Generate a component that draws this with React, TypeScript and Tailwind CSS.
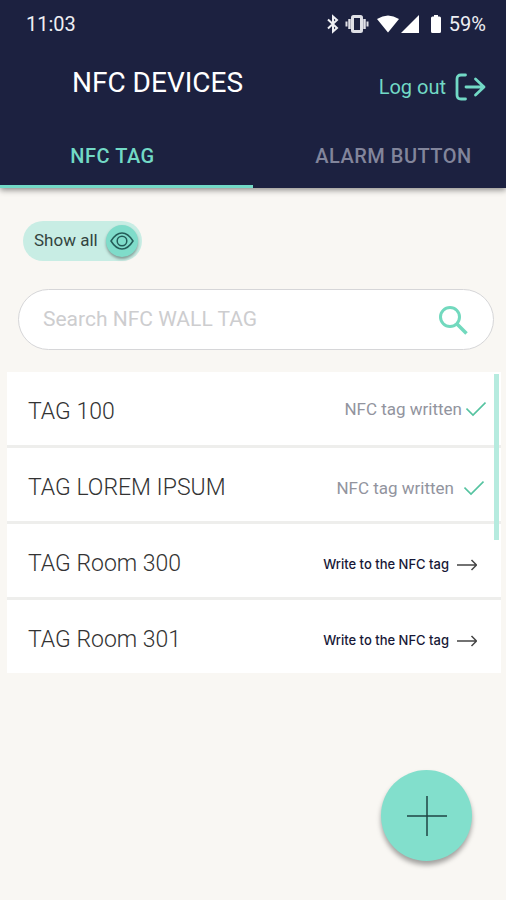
const tags = [
  { name: "TAG 100", written: true, inset: "pr-[15px] gap-1 pb-1.5" },
  { name: "TAG LOREM IPSUM", written: true, inset: "pr-[17px] gap-2.5" },
  { name: "TAG Room 300", written: false, inset: "pr-6 gap-2" },
  { name: "TAG Room 301", written: false, inset: "pr-6 gap-2" },
];

function StatusBar() {
  return (
    <div className="flex h-12 items-center justify-between pl-[26px] pr-5 text-xl text-[#eeeff3]">
      <span>11:03</span>
      <div className="flex items-center">
        <svg className="h-5 w-4" viewBox="0 0 16 20" fill="none" stroke="currentColor" strokeWidth="2">
          <path d="M3 5.500 12 14l-4 3.500v-15L12 6l-9 8.500" />
        </svg>
        <svg className="ml-1 h-5 w-6" viewBox="0 0 24 20">
          <rect x="7.500" y="2.500" width="9" height="15" rx="1" fill="none" stroke="#dfe0e6" strokeWidth="3" />
          <path d="M4.500 5v10M19.500 5v10" stroke="#dfe0e6" strokeWidth="2.500" />
          <path d="M1.500 7.500v5M22.500 7.500v5" stroke="#dfe0e6" strokeWidth="2" />
        </svg>
        <svg className="ml-2 h-5 w-[22px]" viewBox="0 0 22 20" fill="#fff">
          <path d="M0 5Q11-2 22 5L11 18.500Z" />
        </svg>
        <svg className="ml-0.5 h-5 w-[18px]" viewBox="0 0 18 20" fill="#fff">
          <path d="M18 1v18H0Z" />
        </svg>
        <svg className="ml-3 h-5 w-2.5" viewBox="0 0 10 20" fill="#fff">
          <path d="M3 1h4v1.500h1.500Q10 2.500 10 4v13.500Q10 19 8.500 19h-7Q0 19 0 17.500V4q0-1.500 1.500-1.500H3Z" />
        </svg>
        <span className="ml-2">59%</span>
      </div>
    </div>
  );
}

function Header() {
  return (
    <header className="relative bg-[#1c2140] shadow-[0_2px_6px_rgba(0,0,0,0.45)]">
      <StatusBar />
      <div className="flex h-[78px] items-center justify-between pl-[72px] pr-5">
        <h1 className="pb-2 text-[28px] leading-10 text-white">NFC DEVICES</h1>
        <button type="button" className="flex items-center gap-2 text-xl text-[#72d9c6]">
          Log out
          <svg
            className="h-7 w-8"
            viewBox="0 0 32 28"
            fill="none"
            stroke="currentColor"
            strokeWidth="2.800"
            strokeLinecap="round"
            strokeLinejoin="round"
          >
            <path d="M11.500 2H7Q3 2 3 6v16q0 4 4 4h4.500M12 14h18M21.500 6l8.500 8-8.500 8" />
          </svg>
        </button>
      </div>
      <nav className="grid h-[62px] grid-cols-2 text-xl font-medium tracking-wide">
        <button type="button" className="border-b-[3px] border-[#72d9c6] pr-7 text-[#72d9c6]">
          NFC TAG
        </button>
        <button type="button" className="border-b-[3px] border-transparent pl-7 whitespace-nowrap text-[#82859b]">
          ALARM BUTTON
        </button>
      </nav>
    </header>
  );
}

function ShowAll() {
  return (
    <button
      type="button"
      className="ml-[23px] flex h-10 items-center gap-2 rounded-full bg-[#c8ede4] pl-[11px] pr-1 text-[17px] text-[#33443f]"
    >
      Show all
      <span className="flex size-8 items-center justify-center rounded-full bg-[#7fdcca] shadow-[0_2px_3px_rgba(0,0,0,0.35)]">
        <svg className="h-5 w-6" viewBox="0 0 24 20" fill="none" stroke="#245c58" strokeWidth="1.500">
          <path d="M1 10Q6 2 12 2t11 8q-5 8-11 8T1 10Z" />
          <circle cx="12" cy="10" r="4.800" />
        </svg>
      </span>
    </button>
  );
}

function SearchBox() {
  return (
    <form className="ml-[18px] mr-3 mt-7 flex h-[61px] items-center rounded-full border border-[#d6d6d8] bg-white px-6">
      <input
        type="text"
        aria-label="Search NFC WALL TAG"
        placeholder="Search NFC WALL TAG"
        className="min-w-0 flex-1 text-[21px] text-[#555] outline-none placeholder:text-[#cdcdcf]"
      />
      <button type="button" aria-label="Search">
        <svg className="size-8" viewBox="0 0 32 32" fill="none" stroke="#72d9be">
          <circle cx="13" cy="13" r="9.500" strokeWidth="3" />
          <path d="m20 20 9.500 9.500" strokeWidth="3.500" />
        </svg>
      </button>
    </form>
  );
}

function TagList() {
  return (
    <div className="relative ml-[7px] mr-[5px] mt-[22px]">
      <ul className="flex flex-col gap-[3px] bg-[#eeeeec]">
        {tags.map((tag) => (
          <li key={tag.name} className="flex h-[73px] items-center justify-between bg-white pl-[21px] pt-2">
            <span className="text-[23px] font-light text-[#333]">{tag.name}</span>
            {tag.written ? (
              <span className={`flex items-center text-[17px] text-[#92949e] ${tag.inset}`}>
                NFC tag written
                <svg className="h-5 w-5" viewBox="0 0 20 20" fill="none" stroke="#55c3a0" strokeWidth="1.600">
                  <path d="m.5 8.500 6.500 6.500L19.500 2.500" />
                </svg>
              </span>
            ) : (
              <button
                type="button"
                className={`flex items-center font-[Inter,sans-serif] text-[13px] font-medium text-[#171837] ${tag.inset}`}
              >
                Write to the NFC tag
                <svg className="h-4 w-5" viewBox="0 0 20 16" fill="none" stroke="#444" strokeWidth="1.500">
                  <path d="M0 8h19M14.500 3l5 5-5 5" />
                </svg>
              </button>
            )}
          </li>
        ))}
      </ul>
      <div className="absolute right-0.5 top-0.5 h-[166px] w-[5px] bg-[#b6ebdf]" />
    </div>
  );
}

export default function App() {
  return (
    <div className="relative min-h-screen bg-[#f9f7f3] font-[Roboto,sans-serif]">
      <Header />
      <main className="pt-[33px]">
        <ShowAll />
        <SearchBox />
        <TagList />
      </main>
      <button
        type="button"
        aria-label="Add tag"
        className="absolute bottom-[39px] right-[34px] flex size-[91px] items-center justify-center rounded-full bg-[#82dfcc] shadow-[0_4px_5px_rgba(0,0,0,0.35)]"
      >
        <svg className="size-10" viewBox="0 0 40 40" stroke="#1f4644" strokeWidth="1.500">
          <path d="M20 0v40M0 20h40" />
        </svg>
      </button>
    </div>
  );
}
